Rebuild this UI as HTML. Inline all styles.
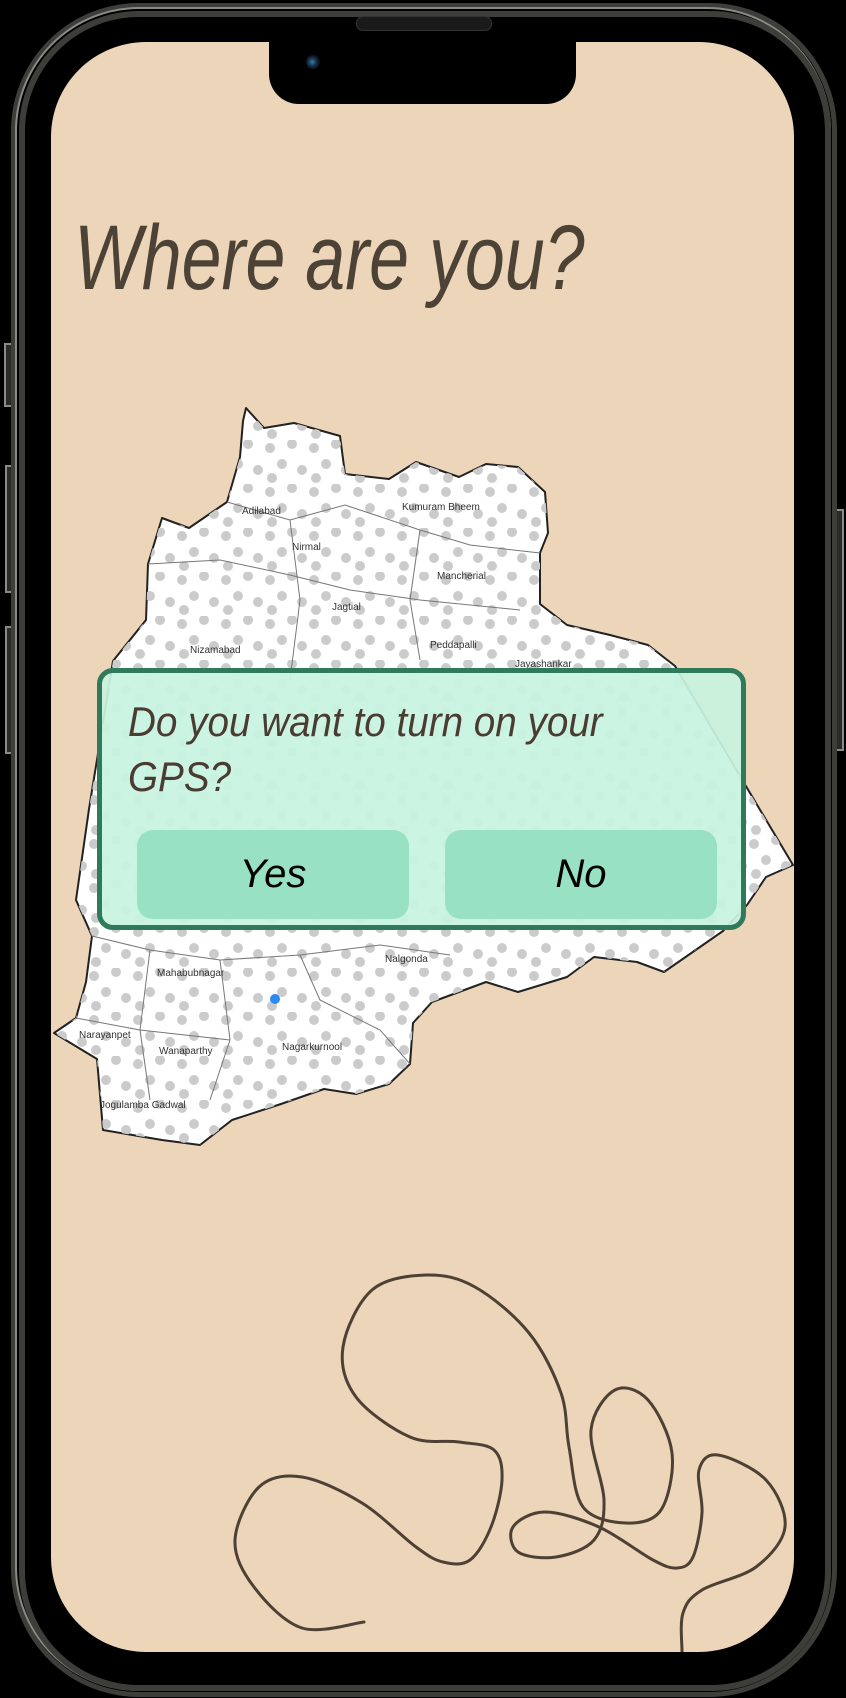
<!DOCTYPE html>
<html><head><meta charset="utf-8"><style>
html,body{margin:0;padding:0;background:#000;}
body{width:846px;height:1698px;position:relative;overflow:hidden;font-family:"Liberation Sans",sans-serif;}
.abs{position:absolute;}
.ring{left:11px;top:3px;width:816px;height:1684px;border:5px solid #3d3d39;border-radius:128px;}
.ring2{left:15px;top:7px;width:812px;height:1680px;border:2px solid #8a8a86;border-radius:124px;}
.ring3{left:19px;top:11px;width:800px;height:1668px;border:6px solid #3d3d39;border-radius:120px;}
.screen{left:51px;top:42px;width:743px;height:1610px;background:#ecd5b8;border-radius:95px;overflow:hidden;}
.notch{left:269px;top:36px;width:307px;height:68px;background:#000;border-radius:0 0 30px 30px;}
.btn{background:#2a2a28;border:2px solid #8a8a86;}
.title{left:74px;top:212px;font-size:92px;font-style:italic;color:#4d4236;white-space:nowrap;transform:scaleX(0.78);transform-origin:left top;line-height:1;}
.dlg{left:97px;top:668px;width:639px;height:252px;border:5px solid #2f7a5a;border-radius:16px;background:rgba(200,243,224,0.93);}
.q{left:128px;top:694px;font-size:42px;font-style:italic;color:#4a3c32;white-space:nowrap;transform:scaleX(0.92);transform-origin:left top;line-height:55px;}
.b{top:830px;width:272px;height:89px;background:#98e2c3;border-radius:16px;font-size:40px;font-style:italic;color:#000;text-align:center;line-height:89px;}
</style></head><body>
<div class="abs btn" style="left:4px;top:343px;width:6px;height:60px"></div>
<div class="abs btn" style="left:5px;top:465px;width:6px;height:124px"></div>
<div class="abs btn" style="left:5px;top:626px;width:6px;height:124px"></div>
<div class="abs btn" style="left:834px;top:509px;width:6px;height:238px"></div>
<div class="abs ring"></div>
<div class="abs ring2"></div>
<div class="abs ring3"></div>
<div class="abs" style="left:356px;top:16px;width:134px;height:13px;background:#1a1a1a;border:1px solid #333;border-radius:7px"></div>
<div class="abs screen">
<svg width="743" height="1610" viewBox="51 42 743 1610" style="position:absolute;left:0;top:0">
<defs>
<pattern id="dots" x="0" y="0" width="44" height="44" patternUnits="userSpaceOnUse">
<circle cx="6" cy="8" r="5" fill="#cbcbcb"/><circle cx="28" cy="4" r="5" fill="#cbcbcb"/>
<circle cx="18" cy="24" r="5" fill="#cbcbcb"/><circle cx="38" cy="30" r="5" fill="#cbcbcb"/>
<circle cx="8" cy="38" r="5" fill="#cbcbcb"/>
</pattern>
</defs>
<polygon points="246,408 264,428 294,423 340,436 345,474 389,479 416,462 459,477 486,464 518,467 545,492 548,533 540,553 540,604 567,625 610,635 648,645 675,666 750,793 793,865 766,877 747,905 723,931 664,972 637,962 594,957 567,977 518,992 486,982 432,1002 413,1023 410,1064 389,1084 356,1094 324,1089 281,1104 232,1120 200,1145 162,1140 103,1130 97,1059 54,1033 76,1018 86,982 92,936 76,900 89,809 113,661 146,620 148,564 162,518 189,528 227,502 240,457 243,421" fill="#fff" stroke="#222" stroke-width="2" stroke-linejoin="round"/>
<polygon points="246,408 264,428 294,423 340,436 345,474 389,479 416,462 459,477 486,464 518,467 545,492 548,533 540,553 540,604 567,625 610,635 648,645 675,666 750,793 793,865 766,877 747,905 723,931 664,972 637,962 594,957 567,977 518,992 486,982 432,1002 413,1023 410,1064 389,1084 356,1094 324,1089 281,1104 232,1120 200,1145 162,1140 103,1130 97,1059 54,1033 76,1018 86,982 92,936 76,900 89,809 113,661 146,620 148,564 162,518 189,528 227,502 240,457 243,421" fill="url(#dots)"/>
<g fill="none" stroke="#777" stroke-width="1">
<path d="M227,502 L290,520 L345,505 L420,530 L470,545 L540,553"/>
<path d="M148,564 L220,560 L290,575 L350,590 L420,600 L520,610"/>
<path d="M290,520 L300,600 L290,680"/>
<path d="M420,530 L410,600 L420,660"/>
<path d="M92,936 L150,950 L220,960 L300,955 L380,945 L450,955"/>
<path d="M150,950 L140,1030 L150,1100"/>
<path d="M220,960 L230,1040 L210,1100"/>
<path d="M300,955 L320,1000 L380,1030 L410,1064"/>
<path d="M76,1018 L140,1030 L230,1040"/>
</g>
<g font-size="10" fill="#333" font-family="Liberation Sans">
<text x="242" y="514">Adilabad</text><text x="402" y="510">Kumuram Bheem</text>
<text x="292" y="550">Nirmal</text><text x="437" y="579">Mancherial</text>
<text x="332" y="610">Jagtial</text><text x="190" y="653">Nizamabad</text>
<text x="430" y="648">Peddapalli</text><text x="515" y="667">Jayashankar</text>
<text x="385" y="962">Nalgonda</text><text x="157" y="976">Mahabubnagar</text>
<text x="79" y="1038">Narayanpet</text><text x="159" y="1054">Wanaparthy</text>
<text x="282" y="1050">Nagarkurnool</text><text x="100" y="1108">Jogulamba Gadwal</text>
</g>
<circle cx="275" cy="999" r="5" fill="#2b8af0"/>
<path id="sq" fill="none" stroke="#4e4035" stroke-width="3" stroke-linecap="round" stroke-linejoin="round" d=""/>
</svg>
</div>
<div class="abs notch"></div>
<div class="abs" style="left:306px;top:55px;width:14px;height:14px;border-radius:50%;background:radial-gradient(circle at 45% 50%,#3a7bb0 0,#163046 40%,#0b0f14 70%)"></div>
<div class="abs title">Where are you?</div>
<div class="abs dlg"></div>
<div class="abs q">Do you want to turn on your<br>GPS?</div>
<div class="abs b" style="left:137px">Yes</div>
<div class="abs b" style="left:445px">No</div>
<script>
var p=[[682,1660],[682,1652],[683,1613],[702,1590],[756,1567],[785,1527],[766,1480],[718,1455],[699,1470],[702,1513],[693,1557],[677,1568],[653,1560],[599,1527],[545,1512],[513,1527],[518,1552],[556,1557],[594,1540],[604,1500],[591,1430],[615,1390],[648,1400],[672,1453],[661,1510],[626,1523],[583,1507],[569,1447],[561,1393],[529,1333],[475,1287],[426,1275],[372,1290],[343,1347],[356,1397],[410,1437],[459,1442],[494,1450],[502,1480],[491,1527],[470,1560],[443,1562],[416,1547],[362,1503],[302,1477],[259,1487],[235,1540],[254,1587],[302,1628],[364,1622]];
var d="M"+p[0][0]+","+p[0][1];
for(var i=0;i<p.length-1;i++){var p0=p[i-1]||p[i],p1=p[i],p2=p[i+1],p3=p[i+2]||p2;
var c1=[p1[0]+(p2[0]-p0[0])/6,p1[1]+(p2[1]-p0[1])/6],c2=[p2[0]-(p3[0]-p1[0])/6,p2[1]-(p3[1]-p1[1])/6];
d+=" C"+c1[0]+","+c1[1]+" "+c2[0]+","+c2[1]+" "+p2[0]+","+p2[1];}
document.getElementById("sq").setAttribute("d",d);
</script>
</body></html>
